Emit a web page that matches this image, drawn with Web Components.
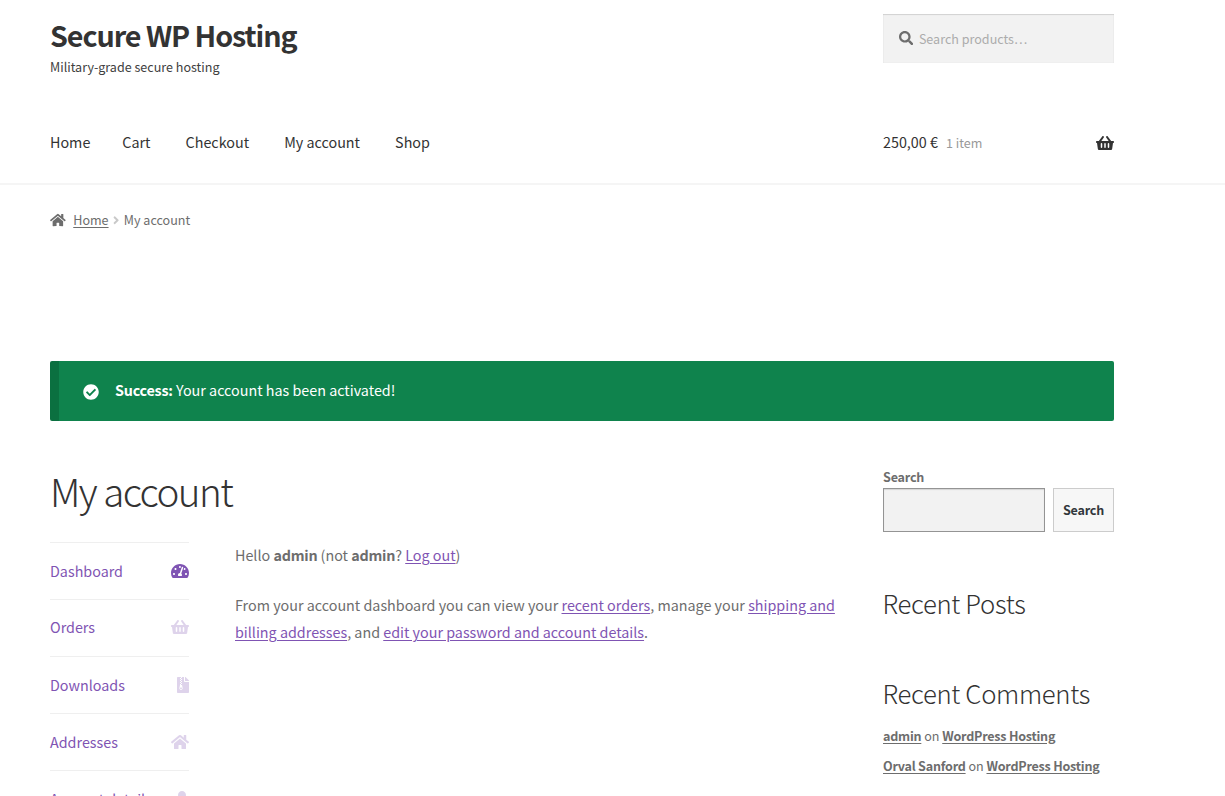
<!DOCTYPE html>
<html lang="en">
<head>
<meta charset="utf-8">
<title>My account – Secure WP Hosting</title>
<style>
html,body{margin:0;height:100%;overflow:hidden;background:#fff}
body{font-family:"Noto Sans CJK SC","Noto Sans",sans-serif;font-size:14.34px;color:#6d6d6d}
</style>
</head>
<body>
<account-page></account-page>
<script>
const ICONS={
search:['0 0 512 512','M505 442.7L405.3 343c-4.5-4.5-10.6-7-17-7H372c27.6-35.3 44-79.7 44-128C416 93.1 322.9 0 208 0S0 93.1 0 208s93.1 208 208 208c48.3 0 92.7-16.4 128-44v16.3c0 6.4 2.5 12.5 7 17l99.7 99.7c9.4 9.4 24.6 9.4 33.9 0l28.3-28.3c9.4-9.4 9.4-24.6.1-34zM208 336c-70.7 0-128-57.2-128-128 0-70.7 57.2-128 128-128 70.7 0 128 57.2 128 128 0 70.7-57.2 128-128 128z'],
basket:['0 0 576 512','M576 216v16c0 13.255-10.745 24-24 24h-8l-26.113 182.788C514.509 462.435 494.257 480 470.37 480H105.63c-23.887 0-44.139-17.565-47.518-41.212L32 256h-8c-13.255 0-24-10.745-24-24v-16c0-13.255 10.745-24 24-24h67.341l106.78-146.821c10.395-14.292 30.407-17.453 44.701-7.058 14.293 10.395 17.453 30.408 7.058 44.701L170.477 192h235.046L326.12 82.821c-10.395-14.292-7.234-34.306 7.059-44.701 14.291-10.395 34.306-7.235 44.701 7.058L484.659 192H552c13.255 0 24 10.745 24 24zM312 392V280c0-13.255-10.745-24-24-24s-24 10.745-24 24v112c0 13.255 10.745 24 24 24s24-10.745 24-24zm112 0V280c0-13.255-10.745-24-24-24s-24 10.745-24 24v112c0 13.255 10.745 24 24 24s24-10.745 24-24zm-224 0V280c0-13.255-10.745-24-24-24s-24 10.745-24 24v112c0 13.255 10.745 24 24 24s24-10.745 24-24z'],
home:['0 0 576 512','M280.37 148.26L96 300.11V464a16 16 0 0 0 16 16l112.06-.29a16 16 0 0 0 15.92-16V368a16 16 0 0 1 16-16h64a16 16 0 0 1 16 16v95.64a16 16 0 0 0 16 16.05L464 480a16 16 0 0 0 16-16V300L295.67 148.26a12.19 12.19 0 0 0-15.3 0zM571.6 251.47L488 182.56V44.05a12 12 0 0 0-12-12h-56a12 12 0 0 0-12 12v72.61L318.47 43a48 48 0 0 0-61 0L4.34 251.47a12 12 0 0 0-1.6 16.9l25.5 31A12 12 0 0 0 45.15 301l235.22-193.74a12.19 12.19 0 0 1 15.3 0L530.9 301a12 12 0 0 0 16.9-1.6l25.5-31a12 12 0 0 0-1.7-16.93z'],
check:['0 0 512 512','M504 256c0 136.967-111.033 248-248 248S8 392.967 8 256 119.033 8 256 8s248 111.033 248 248zM227.314 387.314l184-184c6.248-6.248 6.248-16.379 0-22.627l-22.627-22.627c-6.248-6.249-16.379-6.249-22.628 0L216 308.118l-70.059-70.059c-6.248-6.248-16.379-6.248-22.628 0l-22.627 22.627c-6.248 6.248-6.248 16.379 0 22.627l104 104c6.249 6.249 16.379 6.249 22.628.001z'],
gauge:['0 0 576 512','M288 32C128.94 32 0 160.94 0 320c0 52.8 14.25 102.26 39.06 144.8 5.61 9.62 16.3 15.2 27.44 15.2h443c11.14 0 21.83-5.58 27.44-15.2C561.75 422.26 576 372.8 576 320c0-159.06-128.94-288-288-288zm0 64c14.71 0 26.58 10.13 30.32 23.65-1.11 2.26-2.64 4.23-3.45 6.67l-9.22 27.67c-5.13 3.49-10.97 6.01-17.64 6.01-17.67 0-32-14.33-32-32S270.33 96 288 96zM96 384c-17.67 0-32-14.33-32-32s14.33-32 32-32 32 14.33 32 32-14.33 32-32 32zm48-160c-17.67 0-32-14.33-32-32s14.33-32 32-32 32 14.33 32 32-14.33 32-32 32zm246.77-72.41l-61.33 184C343.13 347.33 352 364.54 352 384c0 11.72-3.38 22.55-8.88 32H232.88c-5.5-9.45-8.88-20.28-8.88-32 0-33.94 26.5-61.43 59.9-63.59l61.34-184.01c4.17-12.56 17.73-19.45 30.36-15.17 12.57 4.19 19.35 17.79 15.17 30.36zm14.66 57.2l15.52-46.55c3.47-1.29 7.13-2.23 11.05-2.23 17.67 0 32 14.33 32 32s-14.33 32-32 32c-11.38-.01-20.89-6.28-26.57-15.22zM480 384c-17.67 0-32-14.33-32-32s14.33-32 32-32 32 14.33 32 32-14.33 32-32 32z'],
archive:['0 0 384 512','M377 105L279.1 7c-4.5-4.5-10.6-7-17-7H256v128h128v-6.1c0-6.3-2.5-12.4-7-16.9zM128.4 336c-17.9 0-32.4 12.1-32.4 27 0 15 14.6 27 32.5 27s32.4-12.1 32.4-27-14.6-27-32.5-27zM224 136V0h-63.6v32h-32V0H24C10.7 0 0 10.7 0 24v464c0 13.3 10.7 24 24 24h336c13.3 0 24-10.7 24-24V160H248c-13.2 0-24-10.8-24-24zM95.9 32h32v32h-32zm32.3 384c-33.2 0-58-30.4-51.4-62.9L96.4 256v-32h32v-32h-32v-32h32v-32h-32V96h32V64h32v32h-32v32h32v32h-32v32h32v32h-32v32h22.1c5.7 0 10.7 4.1 11.8 9.7l17.3 87.7c6.4 32.4-18.4 62.6-51.4 62.6z'],
user:['0 0 448 512','M224 256c70.7 0 128-57.3 128-128S294.7 0 224 0 96 57.3 96 128s57.3 128 128 128zm89.6 32h-16.7c-22.2 10.2-46.9 16-72.9 16s-50.6-5.8-72.9-16h-16.7C60.2 288 0 348.2 0 422.4V464c0 26.5 21.5 48 48 48h352c26.5 0 48-21.5 48-48v-41.6c0-74.2-60.2-134.4-134.4-134.4z'],
angle:['0 0 256 512','M224.3 273l-136 136c-9.4 9.4-24.6 9.4-33.9 0l-22.6-22.6c-9.4-9.4-9.4-24.6 0-33.9l96.4-96.4-96.4-96.4c-9.4-9.4-9.4-24.6 0-33.9L54.3 103c9.4-9.4 24.6-9.4 33.9 0l136 136c9.5 9.4 9.5 24.6.1 34z']
};
function define(name,html,init){
  const t=document.createElement('template');
  t.innerHTML=html;
  customElements.define(name,class extends HTMLElement{
    connectedCallback(){
      if(this.shadowRoot)return;
      const root=this.attachShadow({mode:'open'});
      root.append(t.content.cloneNode(true));
      if(init)init(this,root);
    }
  });
}
define('fa-icon',`<style>:host{display:block;flex:none;height:16px}svg{display:block;height:100%;width:auto;fill:currentColor}</style>
<svg aria-hidden="true"><path/></svg>`,(el,r)=>{
  const [box,d]=ICONS[el.getAttribute('name')];
  const s=r.querySelector('svg');
  s.setAttribute('viewBox',box);
  s.firstElementChild.setAttribute('d',d);
});
define('site-branding',`<style>:host{display:block;color:#404040}
h1{margin:0;font-size:28.7px;line-height:40px;letter-spacing:-1.06px;font-weight:700;color:#333}
p{margin:0;font-size:12.55px;line-height:24px}</style>
<h1><slot></slot></h1><p><slot name="tagline"></slot></p>`);
define('product-search',`<style>:host{display:flex;box-sizing:border-box;height:48.5px;margin-top:-.5px;align-items:center;gap:6px;padding-left:15.6px;background:#f2f2f2;box-shadow:inset 0 1px 1px rgba(0,0,0,.125),inset 0 0 1px rgba(0,0,0,.12);font-size:12.55px;line-height:20px;color:#acacac}
fa-icon{height:14.3px;color:#6d6d6d}span{padding-top:1.2px}</style>
<fa-icon name="search"></fa-icon><span><slot></slot></span>`);
define('nav-link',`<style>:host{display:block;margin-right:35.1px}:host([first]){margin-right:32px}a{color:#333}</style><a><slot></slot></a>`);
define('main-nav',`<style>:host{display:flex;line-height:24px}</style><slot></slot>`);
define('cart-link',`<style>:host{display:flex;align-items:center;line-height:24px;color:#333}
small{font-size:12.55px;color:#999;margin:1px 0 0 8.2px;flex:1}fa-icon{margin-top:2px}</style>
<span><slot></slot></span><small><slot name="count"></slot></small><fa-icon name="basket"></fa-icon>`);
define('site-header',`<style>:host{display:block;box-sizing:border-box;height:185px;border-bottom:2px solid #f5f5f5;padding:14.5px 0 0 50px}
.grid{display:grid;grid-template-columns:833px 231px;grid-template-rows:64px 24px;align-items:start;row-gap:51px}</style>
<div class="grid">
<site-branding>Secure WP Hosting<span slot="tagline">Military-grade secure hosting</span></site-branding>
<product-search>Search products…</product-search>
<main-nav><nav-link first>Home</nav-link><nav-link>Cart</nav-link><nav-link>Checkout</nav-link><nav-link>My account</nav-link><nav-link>Shop</nav-link></main-nav>
<cart-link>250,00 €<span slot="count">1 item</span></cart-link>
</div>`);
define('bread-crumb',`<style>:host{display:flex;align-items:center;font-size:12.55px;line-height:20px;margin-top:25px}
fa-icon{height:14px}fa-icon[name=angle]{height:12.5px;margin:0 5px 0 4px;color:#c9c9c9}
a{margin-left:7.5px;text-decoration:underline;text-underline-offset:1.5px}</style>
<fa-icon name="home"></fa-icon><a>Home</a><fa-icon name="angle"></fa-icon><span>My account</span>`);
define('success-notice',`<style>:host{display:flex;box-sizing:border-box;height:60px;align-items:center;margin-top:131px;padding-left:24px;border-left:9px solid #0b7040;border-radius:2px;background:#0f834d;color:#fff;line-height:24px}
fa-icon{margin:2px 16px 0 0}p{margin:0 0 3px}</style>
<fa-icon name="check"></fa-icon><p><slot></slot></p>`);
define('menu-item',`<style>:host{display:flex;box-sizing:border-box;height:57.2px;align-items:center;justify-content:space-between;border-top:1px solid #efefef;color:#7f54b3;line-height:24px;white-space:nowrap}
:host([raised]){padding-bottom:1px}
fa-icon{opacity:.25}:host([active]) fa-icon{opacity:1}</style><a><slot></slot></a>`,(el,r)=>{
  const ic=document.createElement('fa-icon');
  ic.setAttribute('name',el.getAttribute('icon'));
  r.append(ic);
});
define('account-menu',`<style>:host{display:block;width:139px}</style>
<menu-item icon="gauge" active>Dashboard</menu-item><menu-item icon="basket" raised>Orders</menu-item><menu-item icon="archive" raised>Downloads</menu-item><menu-item icon="home">Addresses</menu-item><menu-item icon="user" raised>Account details</menu-item>`);
define('account-content',`<style>:host{display:block;width:610px;line-height:27px;margin-top:-.7px}
p{margin:0 0 23px}a{color:#7f54b3;text-decoration:underline;text-underline-offset:1.5px}b{letter-spacing:-.015em}</style>
<p>Hello <b>admin</b> (not <b>admin</b>? <a>Log out</a>)</p>
<p>From your account dashboard you can view your <a>recent orders</a>, manage your <a>shipping and billing addresses</a>, and <a>edit your password and account details</a>.</p>`);
define('search-widget',`<style>:host{display:block;font-size:12.55px;font-weight:700;letter-spacing:-.015em}
label{display:block;line-height:20px;padding-top:1px;margin-bottom:1px}
.row{display:flex;gap:8px;height:44px}
.field{flex:1;box-sizing:border-box;border:1px solid #949494;background:#f2f2f2;box-shadow:inset 0 1px 1px rgba(0,0,0,.125)}
.btn{width:61px;box-sizing:border-box;border:1px solid #ccc;background:#f7f7f7;color:#32373c;line-height:42px;text-align:center}</style>
<label>Search</label><div class="row"><div class="field"></div><div class="btn">Search</div></div>`);
define('widget-title',`<style>:host{display:block}h2{margin:0 0 0 -.6px;font-size:25.7px;letter-spacing:-.32px;font-weight:300;line-height:32px;color:#333;white-space:nowrap}</style><h2><slot></slot></h2>`);
define('comment-item',`<style>:host{display:block;font-size:12.55px;line-height:22px;margin-bottom:8px}
a{font-weight:700;letter-spacing:-.018em;text-decoration:underline;text-underline-offset:1.5px}</style>
<a><slot name="author"></slot></a> on <a><slot></slot></a>`);
define('side-bar',`<style>:host{display:block;width:231px}
.posts{margin-top:55px}.comments{margin:58px 0 15.5px}</style>
<search-widget></search-widget>
<widget-title class="posts">Recent Posts</widget-title>
<widget-title class="comments">Recent Comments</widget-title>
<comment-item><span slot="author">admin</span>WordPress Hosting</comment-item>
<comment-item><span slot="author">Orval Sanford</span>WordPress Hosting</comment-item>`);
define('account-page',`<style>:host{display:block;height:796px;overflow:hidden}
main{width:1064px;margin-left:50px}
.cols{display:grid;grid-template-columns:833px 231px;margin-top:45px}
h1{margin:0 0 27.7px;font-size:38.6px;font-weight:300;line-height:48px;letter-spacing:-1.55px;color:#333}
.account{display:flex;gap:46px}b{letter-spacing:-.015em}</style>
<site-header></site-header>
<main><bread-crumb></bread-crumb>
<success-notice><b>Success:</b> Your account has been activated!</success-notice>
<div class="cols"><section><h1>My account</h1><div class="account"><account-menu></account-menu><account-content></account-content></div></section><side-bar></side-bar></div></main>`);
</script>
</body>
</html>
